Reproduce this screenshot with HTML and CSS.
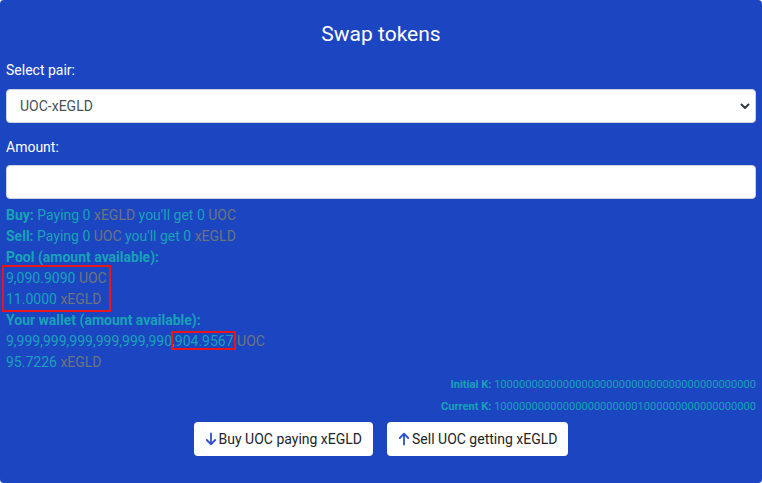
FILE: index.html
```html
<!DOCTYPE html>
<html>
<head>
<meta charset="utf-8">
<link rel="stylesheet" href="styles.css">
</head>
<body>
<div class="card">
  <h1 class="title">Swap tokens</h1>
  <label class="field-label">Select pair:</label>
  <div class="select-wrap">
    <select class="control select">
      <option>UOC-xEGLD</option>
    </select>
    <svg class="chevron" width="10" height="8" viewBox="0 0 10 8"><path d="M1.5 2.5 L5 6 L8.5 2.5" fill="none" stroke="#343a40" stroke-width="2" stroke-linecap="round" stroke-linejoin="round"/></svg>
  </div>
  <label class="field-label">Amount:</label>
  <input class="control input" type="text">
  <div class="info">
    <div class="line"><b>Buy:</b> Paying 0 <span class="tok">xEGLD</span> you'll get 0 <span class="tok">UOC</span></div>
    <div class="line"><b>Sell:</b> Paying 0 <span class="tok">UOC</span> you'll get 0 <span class="tok">xEGLD</span></div>
    <div class="line"><b>Pool (amount available):</b></div>
    <div class="boxed">
      <div class="line">9,090.9090 <span class="tok">UOC</span></div>
      <div class="line">11.0000 <span class="tok">xEGLD</span></div>
    </div>
    <div class="line"><b>Your wallet (amount available):</b></div>
    <div class="line">9,999,999,999,999,999,990,<span class="mark">904.9567</span> <span class="tok">UOC</span></div>
    <div class="line">95.7226 <span class="tok">xEGLD</span></div>
  </div>
  <div class="k">
    <div class="kline"><b>Initial K:</b> 100000000000000000000000000000000000000000</div>
    <div class="kline"><b>Current K:</b> 100000000000000000000001000000000000000000</div>
  </div>
  <div class="actions">
    <button class="btn"><svg class="arrow" width="12" height="14" viewBox="0 0 12 14"><path d="M6 1.5 V12 M1.8 8 L6 12.3 L10.2 8" fill="none" stroke="#2b4fd0" stroke-width="1.8" stroke-linecap="round" stroke-linejoin="round"/></svg>Buy UOC paying xEGLD</button>
    <button class="btn"><svg class="arrow" width="12" height="14" viewBox="0 0 12 14"><path d="M6 12.5 V2 M1.8 6 L6 1.7 L10.2 6" fill="none" stroke="#2b4fd0" stroke-width="1.8" stroke-linecap="round" stroke-linejoin="round"/></svg>Sell UOC getting xEGLD</button>
  </div>
</div>
</body>
</html>
```
FILE: styles.css
```css
html, body {
  margin: 0;
  padding: 0;
  background: #ffffff;
}
body {
  font-family: Roboto, "Liberation Sans", sans-serif;
  font-size: 14px;
  line-height: 21px;
}
.card {
  width: 762px;
  height: 483px;
  box-sizing: border-box;
  background: #1c45c1;
  border-radius: 4px;
  padding: 22px 6px 0;
}
.title {
  margin: 0 0 14px;
  text-align: center;
  color: #ffffff;
  font-size: 21px;
  font-weight: 400;
  line-height: 24px;
}
.field-label {
  display: block;
  color: #ffffff;
  margin-bottom: 8px;
}
.control {
  display: block;
  width: 100%;
  height: 34px;
  box-sizing: border-box;
  border: 1px solid #ced4da;
  border-radius: 4px;
  background: #ffffff;
  font-family: inherit;
  font-size: 14px;
  color: #495057;
  margin: 0;
}
.select-wrap {
  position: relative;
  margin-bottom: 14px;
}
.select {
  appearance: none;
  -webkit-appearance: none;
  padding: 0 28px 0 13px;
  outline: none;
}
.chevron {
  position: absolute;
  right: 6px;
  top: 13px;
}
.input {
  margin-top: -1px;
  padding: 0 12px;
  outline: none;
}
.info {
  margin-top: 6px;
  color: #17a2b8;
}
.info b {
  font-weight: 700;
}
.tok {
  color: #6c757d;
}
.boxed {
  position: relative;
}
.boxed::after {
  content: "";
  position: absolute;
  left: -4px;
  top: -3px;
  width: 109px;
  height: 47px;
  box-sizing: border-box;
  border: 2px solid #e8161b;
  pointer-events: none;
}
.mark {
  position: relative;
}
.mark::after {
  content: "";
  position: absolute;
  left: -4px;
  right: -2px;
  top: -2px;
  bottom: -1px;
  border: 2px solid #e8161b;
}
.k {
  margin-top: 1px;
  text-align: right;
  color: #17a2b8;
  font-size: 11.1px;
  line-height: 22px;
}
.actions {
  display: flex;
  justify-content: center;
  gap: 14px;
  margin-top: 4px;
}
.btn {
  display: flex;
  align-items: center;
  gap: 2px;
  height: 34px;
  padding: 0 11px;
  border: none;
  border-radius: 4px;
  background: #ffffff;
  color: #212529;
  font-family: inherit;
  font-size: 14px;
}
.arrow {
  display: block;
}
```
